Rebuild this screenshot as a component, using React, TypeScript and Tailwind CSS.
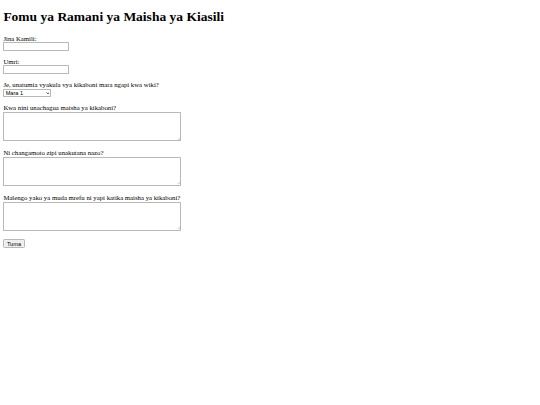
import React from "react";

const ctrlFont = "font-['Liberation_Sans',Arial,sans-serif] text-[13.333px] leading-[normal] text-black";

const inputCls =
  "inline-block w-[156px] h-[21px] border-2 border-[#b8b8b8] rounded-[2px] bg-white px-[2px] py-[1px] align-baseline " +
  ctrlFont;

function Area({ id, extra }: { id: string; extra: string }) {
  return (
    <span className={"relative inline-block align-baseline " + extra}>
      <textarea
        id={id}
        rows={4}
        cols={50}
        className="block w-[422px] h-[68px] border border-[#b8b8b8] rounded-[2px] bg-white px-[2px] py-[2px] font-['Liberation_Mono',monospace] text-[13.333px] leading-[normal] resize-none"
      />
      <svg
        className="pointer-events-none absolute right-[2px] bottom-[2px] h-[8px] w-[8px]"
        viewBox="0 0 8 8"
        aria-hidden="true"
      >
        <line x1="7.5" y1="1" x2="1" y2="7.5" stroke="#9a9a9a" strokeWidth="1" />
        <line x1="7.5" y1="4.5" x2="4.5" y2="7.5" stroke="#9a9a9a" strokeWidth="1" />
      </svg>
    </span>
  );
}

export default function App() {
  return (
    <div className="[zoom:0.421875] bg-white px-2 font-['Liberation_Serif','Times_New_Roman',serif] text-[16px] leading-[normal] text-black">
      <h1 className="mt-[21.44px] mb-[24.2px] text-[32px] font-bold leading-[normal]">
        Fomu ya Ramani ya Maisha ya Kiasili
      </h1>
      <form onSubmit={(e) => e.preventDefault()}>
        <label htmlFor="jina">Jina Kamili:</label>
        <br />
        <input id="jina" type="text" className={inputCls} />
        <br />
        <br />
        <label htmlFor="umri">Umri:</label>
        <br />
        <input id="umri" type="text" className={inputCls} />
        <br />
        <br />
        <label htmlFor="mara">Je, unatumia vyakula vya kikaboni mara ngapi kwa wiki?</label>
        <br />
        <span className="relative mt-[2.5px] inline-block align-baseline">
          <select
            id="mara"
            defaultValue="1"
            className={
              "inline-block h-[19px] w-[114px] appearance-none border border-[#b8b8b8] rounded-[2px] bg-white pl-[3px] pr-[16px] align-baseline " +
              ctrlFont
            }
          >
            <option value="1">Mara 1</option>
            <option value="2">Mara 2-3</option>
            <option value="4">Mara 4-6</option>
            <option value="7">Kila siku</option>
          </select>
          <svg
            className="pointer-events-none absolute right-[5px] top-[7px] h-[6px] w-[9px]"
            viewBox="0 0 9 6"
            aria-hidden="true"
          >
            <polyline points="1,1 4.5,4.5 8,1" fill="none" stroke="#000" strokeWidth="1.6" />
          </svg>
        </span>
        <br />
        <br />
        <label htmlFor="kwanini">Kwa nini unachagua maisha ya kikaboni?</label>
        <br />
        <Area id="kwanini" extra="mt-[3px]" />
        <br />
        <br />
        <label htmlFor="changamoto">Ni changamoto zipi unakutana nazo?</label>
        <br />
        <Area id="changamoto" extra="mt-[2.5px]" />
        <br />
        <br />
        <label htmlFor="malengo">Malengo yako ya muda mrefu ni yapi katika maisha ya kikaboni?</label>
        <br />
        <Area id="malengo" extra="mt-[3px]" />
        <br />
        <br />
        <button
          type="submit"
          className={
            "mt-[1.5px] inline-block h-[20px] border-2 border-[#b8b8b8] rounded-[3px] bg-[#efefef] px-[6px] py-0 " +
            ctrlFont
          }
        >
          Tuma
        </button>
      </form>
    </div>
  );
}
